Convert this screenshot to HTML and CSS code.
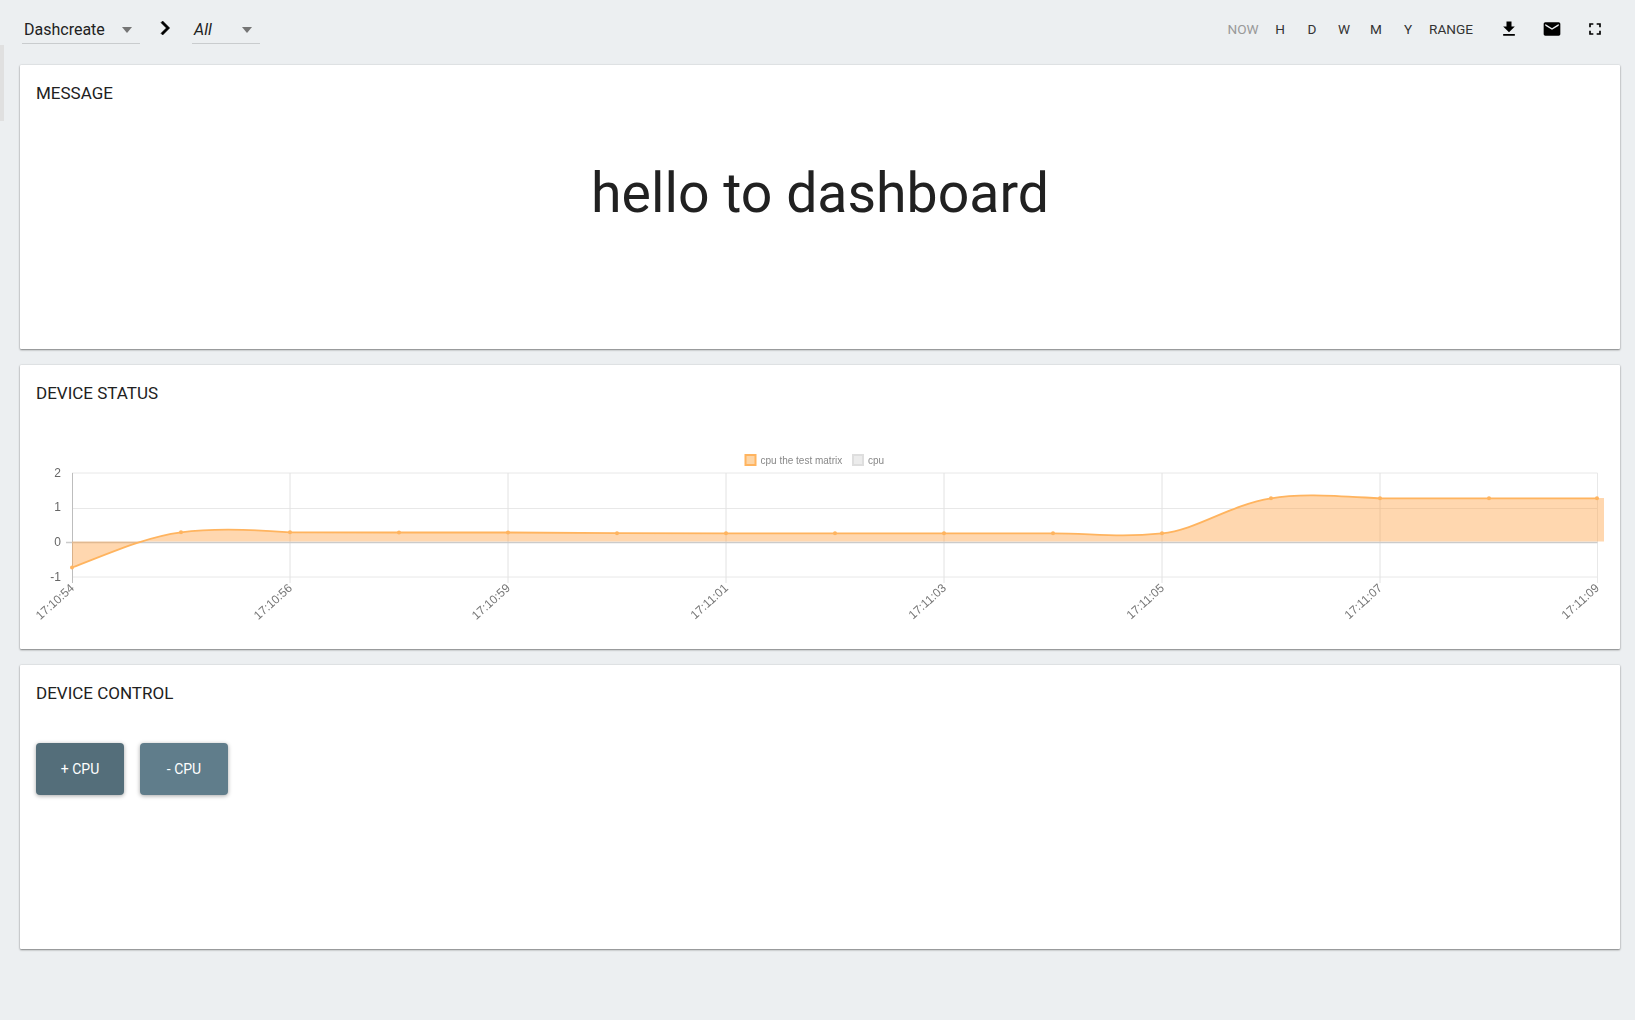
FILE: index.html
```html
<!DOCTYPE html>
<html lang="en">
<head>
<meta charset="utf-8">
<title>Dashboard</title>
<link rel="stylesheet" href="styles.css">
</head>
<body>
<div class="side-stub"></div>
<header class="topbar">
  <div class="crumbs">
    <div class="select select-main"><span>Dashcreate</span><i class="caret"></i></div>
    <svg class="chevron" viewBox="0 0 24 24"><path d="M10 6L8.59 7.41 13.17 12l-4.58 4.59L10 18l6-6z"/></svg>
    <div class="select select-sub"><span>All</span><i class="caret"></i></div>
  </div>
  <nav class="tools">
    <span class="range range-now">NOW</span>
    <span class="range">H</span>
    <span class="range">D</span>
    <span class="range">W</span>
    <span class="range">M</span>
    <span class="range">Y</span>
    <span class="range range-wide">RANGE</span>
    <span class="tool tool-first"><svg viewBox="0 0 24 24"><path d="M19 9h-4V3H9v6H5l7 7 7-7zM5 18v2h14v-2H5z"/></svg></span>
    <span class="tool"><svg viewBox="0 0 24 24"><path d="M20 4H4c-1.1 0-1.99.9-1.99 2L2 18c0 1.1.9 2 2 2h16c1.1 0 2-.9 2-2V6c0-1.1-.9-2-2-2zm0 4l-8 5-8-5V6l8 5 8-5v2z"/></svg></span>
    <span class="tool"><svg viewBox="0 0 24 24"><path d="M7 14H5v5h5v-2H7v-3zm-2-4h2V7h3V5H5v5zm12 7h-3v2h5v-5h-2v3zM14 5v2h3v3h2V5h-5z"/></svg></span>
  </nav>
</header>
<main class="cards">
  <section class="card">
    <h2 class="card-title">MESSAGE</h2>
    <p class="hello">hello to dashboard</p>
  </section>
  <section class="card">
    <h2 class="card-title">DEVICE STATUS</h2>
    <svg class="chart" viewBox="20 430 1600 200" width="1600" height="200">
      <g class="grid">
        <path d="M72 473H1597.500M72 508.500H1597.500M72 577H1597.500M1597.500 473V583"/>
        <path d="M290 473V583M508 473V583M726 473V583M944 473V583M1162 473V583M1380 473V583"/>
      </g>
      <path class="axis" d="M72.500 473V583"/>
      <path class="zero" d="M66 542.500H1597.500"/>
      <path class="area" d="M72 542V567.500C110 553 145 537 181 532.300C205 529 235 528 290 532.300L399 532.500L508 532.500L617 533.200L726 533.300L1053 533.300C1092 533.300 1117 538 1162 533.300C1197 530 1229 505 1271 498.300C1300 493 1337 496 1380 498L1597 498H1604V541.500H72Z"/>
      <path class="line" d="M72 567.500C110 553 145 537 181 532.300C205 529 235 528 290 532.300L399 532.500L508 532.500L617 533.200L726 533.300L1053 533.300C1092 533.300 1117 538 1162 533.300C1197 530 1229 505 1271 498.300C1300 493 1337 496 1380 498.300L1597 498.300"/>
      <g class="dots">
        <circle cx="72" cy="567.500" r="2"/><circle cx="181" cy="532.300" r="2"/><circle cx="290" cy="532.300" r="2"/><circle cx="399" cy="532.500" r="2"/><circle cx="508" cy="532.500" r="2"/><circle cx="617" cy="533.200" r="2"/><circle cx="726" cy="533.300" r="2"/><circle cx="835" cy="533.300" r="2"/><circle cx="944" cy="533.300" r="2"/><circle cx="1053" cy="533.300" r="2"/><circle cx="1162" cy="533.300" r="2"/><circle cx="1271" cy="498.300" r="2"/><circle cx="1380" cy="498.300" r="2"/><circle cx="1489" cy="498.300" r="2"/><circle cx="1597" cy="498.300" r="2"/>
      </g>
      <g class="ylabels">
        <text x="61" y="477">2</text><text x="61" y="511">1</text><text x="61" y="546">0</text><text x="61" y="581">-1</text>
      </g>
      <g class="xlabels">
        <text transform="translate(75 589) rotate(-42)">17:10:54</text>
        <text transform="translate(293 589) rotate(-42)">17:10:56</text>
        <text transform="translate(511 589) rotate(-42)">17:10:59</text>
        <text transform="translate(729 589) rotate(-42)">17:11:01</text>
        <text transform="translate(947 589) rotate(-42)">17:11:03</text>
        <text transform="translate(1165 589) rotate(-42)">17:11:05</text>
        <text transform="translate(1383 589) rotate(-42)">17:11:07</text>
        <text transform="translate(1600 589) rotate(-42)">17:11:09</text>
      </g>
      <g class="legend">
        <rect class="legend-a" x="745.500" y="455" width="10" height="10"/>
        <text x="760.500" y="464">cpu the test matrix</text>
        <rect class="legend-b" x="853" y="455" width="10" height="10"/>
        <text x="868" y="464">cpu</text>
      </g>
    </svg>
  </section>
  <section class="card">
    <h2 class="card-title">DEVICE CONTROL</h2>
    <div class="actions">
      <button class="btn btn-plus" type="button">+ CPU</button>
      <button class="btn btn-minus" type="button">- CPU</button>
    </div>
  </section>
</main>
</body>
</html>
```
FILE: styles.css
```css
* { box-sizing: border-box; }
html, body { margin: 0; height: 100%; }
body {
  background: #eceff1;
  color: #212121;
  font-family: Roboto, "Liberation Sans", sans-serif;
  font-size: 16px;
  overflow: hidden;
}
.side-stub {
  position: absolute;
  left: 0;
  top: 45px;
  width: 4px;
  height: 76px;
  background: #e0e0e0;
}
.topbar {
  display: flex;
  align-items: flex-start;
  justify-content: space-between;
  height: 65px;
  padding: 14px 19px 0 22px;
}
.crumbs { display: flex; align-items: flex-start; }
.select {
  display: flex;
  align-items: center;
  justify-content: space-between;
  height: 30px;
  padding: 2px 8px 0 2px;
  border-bottom: 1px solid #c9ccce;
}
.select-main { width: 118px; }
.select-sub { width: 68px; font-style: italic; }
.caret {
  width: 0;
  height: 0;
  border-left: 5.500px solid transparent;
  border-right: 5.500px solid transparent;
  border-top: 6px solid #757575;
}
.chevron { width: 28px; height: 28px; margin: 0 13px 0 11px; fill: #000; stroke: #000; stroke-width: .5; }
.tools { display: flex; align-items: center; height: 30px; font-size: 13.600px; color: #333; }
.range { width: 32px; text-align: center; }
.range-now { width: 38px; margin-right: 2px; color: #999; }
.range-wide { width: 54px; }
.tool { display: flex; width: 43px; justify-content: center; fill: #000; }
.tool-first { margin-left: 9px; }
.tool svg { display: block; width: 20px; height: 20px; }
.cards {
  display: flex;
  flex-direction: column;
  gap: 16px;
  padding: 0 15px 0 20px;
}
.card {
  height: 284px;
  padding: 16px;
  background: #fff;
  border-radius: 1px;
  box-shadow: 0 1px 2px rgba(0, 0, 0, .45), 0 0 2px rgba(0, 0, 0, .12);
}
.card-title {
  margin: 0;
  font-size: 17px;
  font-weight: 400;
  line-height: 24px;
}
.hello {
  margin: 53px 0 0;
  font-size: 55.400px;
  line-height: 72px;
  text-align: center;
}
.chart {
  display: block;
  margin: 25px -16px 0;
  filter: blur(.35px);
  font-family: "Liberation Sans", Arial, sans-serif;
}
.grid path { fill: none; stroke: #e8e8e8; stroke-width: 1; }
.grid path + path { stroke: #e2e2e2; }
.axis { fill: none; stroke: #bdbdbd; stroke-width: 1; }
.zero { fill: none; stroke: #cbcbcb; stroke-width: 1.500; }
.area { fill: rgba(255, 159, 64, .42); stroke: none; }
.line { fill: none; stroke: #ffb45f; stroke-width: 1.800; }
.dots circle { fill: #ffb45f; }
.ylabels text { fill: #666; font-size: 12px; text-anchor: end; }
.xlabels text { fill: #777; font-size: 12px; text-anchor: end; }
.legend text { fill: #888; font-size: 10px; }
.legend-a { fill: #fdd5a6; stroke: #ffb45f; stroke-width: 2; }
.legend-b { fill: #ececec; stroke: #dedede; stroke-width: 2; }
.actions { display: flex; gap: 16px; margin-top: 38px; }
.btn {
  width: 88px;
  height: 52px;
  border: 0;
  border-radius: 4px;
  color: #fff;
  font: 400 14px Roboto, sans-serif;
  box-shadow: 0 1px 4px rgba(0, 0, 0, .35);
}
.btn-plus { background: #546e7a; }
.btn-minus { background: #607d8b; }
```
